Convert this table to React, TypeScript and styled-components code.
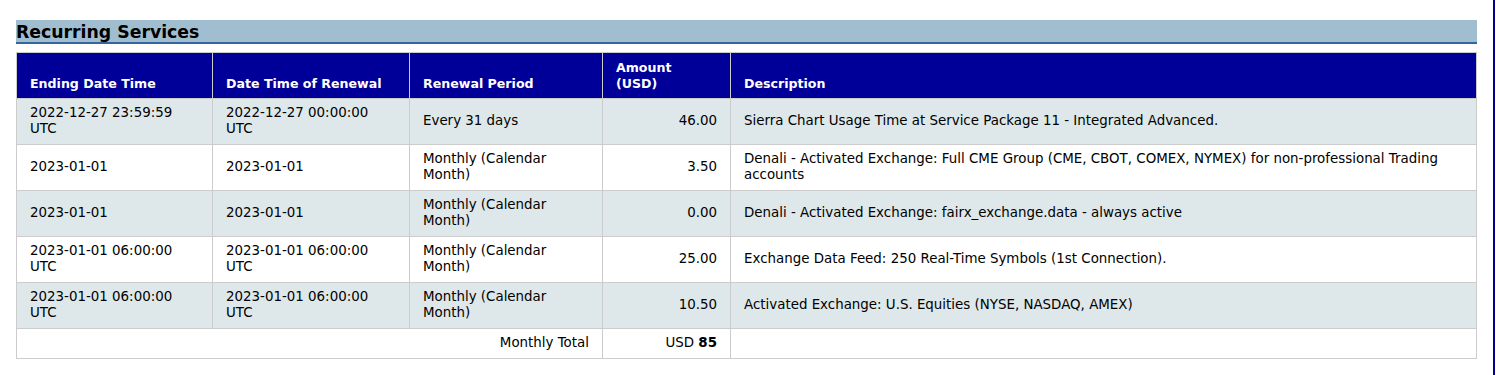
import React from 'react'
import styled, { createGlobalStyle } from 'styled-components'

const GlobalStyle = createGlobalStyle`
  html, body {
    margin: 0;
    padding: 0;
    background: #ffffff;
  }
  body {
    font-family: "DejaVu Sans", Verdana, sans-serif;
    font-size: 13.4px;
    color: #000000;
  }
`

const Page = styled.div`
  box-sizing: border-box;
  width: 1495px;
  min-height: 375px;
  padding: 20px 16px 0 16px;
  border-right: 2px solid #000099;
`

const SectionTitle = styled.h2`
  margin: 0;
  height: 22px;
  line-height: 24px;
  background: #a0bed0;
  border-bottom: 2px solid #3366a0;
  font-size: 17.3px;
  font-weight: bold;
  color: #000000;
`

const Table = styled.table`
  margin-top: 8px;
  width: 100%;
  border-collapse: collapse;
  table-layout: fixed;
`

const HeadCell = styled.th<{ $align?: 'left' | 'right' }>`
  background: #000099;
  color: #ffffff;
  font-weight: bold;
  font-size: 12.6px;
  text-align: ${p => p.$align || 'left'};
  vertical-align: bottom;
  line-height: 16px;
  padding: 7px 13px 6px 13px;
  border: 1px solid #cccccc;
`

const Row = styled.tr<{ $shaded?: boolean }>`
  background: ${p => (p.$shaded ? '#dee8ea' : '#ffffff')};
`

const Cell = styled.td<{ $align?: 'left' | 'right' }>`
  text-align: ${p => p.$align || 'left'};
  vertical-align: middle;
  line-height: 16px;
  padding: 6px 13px 7px 13px;
  border: 1px solid #cccccc;
  color: #000000;
`

const Total = styled.b`
  font-weight: bold;
`

type Service = {
  ending: string
  renewal: string
  period: string
  amount: string
  description: string
}

const services: Service[] = [
  {
    ending: '2022-12-27 23:59:59 UTC',
    renewal: '2022-12-27 00:00:00 UTC',
    period: 'Every 31 days',
    amount: '46.00',
    description: 'Sierra Chart Usage Time at Service Package 11 - Integrated Advanced.',
  },
  {
    ending: '2023-01-01',
    renewal: '2023-01-01',
    period: 'Monthly (Calendar Month)',
    amount: '3.50',
    description:
      'Denali - Activated Exchange: Full CME Group (CME, CBOT, COMEX, NYMEX) for non-professional Trading accounts',
  },
  {
    ending: '2023-01-01',
    renewal: '2023-01-01',
    period: 'Monthly (Calendar Month)',
    amount: '0.00',
    description: 'Denali - Activated Exchange: fairx_exchange.data - always active',
  },
  {
    ending: '2023-01-01 06:00:00 UTC',
    renewal: '2023-01-01 06:00:00 UTC',
    period: 'Monthly (Calendar Month)',
    amount: '25.00',
    description: 'Exchange Data Feed: 250 Real-Time Symbols (1st Connection).',
  },
  {
    ending: '2023-01-01 06:00:00 UTC',
    renewal: '2023-01-01 06:00:00 UTC',
    period: 'Monthly (Calendar Month)',
    amount: '10.50',
    description: 'Activated Exchange: U.S. Equities (NYSE, NASDAQ, AMEX)',
  },
]

export default function App() {
  return (
    <Page>
      <GlobalStyle />
      <SectionTitle>Recurring Services</SectionTitle>
      <Table>
        <colgroup>
          <col style={{ width: 196 }} />
          <col style={{ width: 197 }} />
          <col style={{ width: 193 }} />
          <col style={{ width: 128 }} />
          <col />
        </colgroup>
        <thead>
          <tr>
            <HeadCell>Ending Date Time</HeadCell>
            <HeadCell>Date Time of Renewal</HeadCell>
            <HeadCell>Renewal Period</HeadCell>
            <HeadCell>
              Amount
              <br />
              (USD)
            </HeadCell>
            <HeadCell>Description</HeadCell>
          </tr>
        </thead>
        <tbody>
          {services.map((s, i) => (
            <Row key={i} $shaded={i % 2 === 0}>
              <Cell>{s.ending}</Cell>
              <Cell>{s.renewal}</Cell>
              <Cell>{s.period}</Cell>
              <Cell $align="right">{s.amount}</Cell>
              <Cell>{s.description}</Cell>
            </Row>
          ))}
          <Row>
            <Cell colSpan={3} $align="right">
              Monthly Total
            </Cell>
            <Cell $align="right">
              USD <Total>85</Total>
            </Cell>
            <Cell />
          </Row>
        </tbody>
      </Table>
    </Page>
  )
}
